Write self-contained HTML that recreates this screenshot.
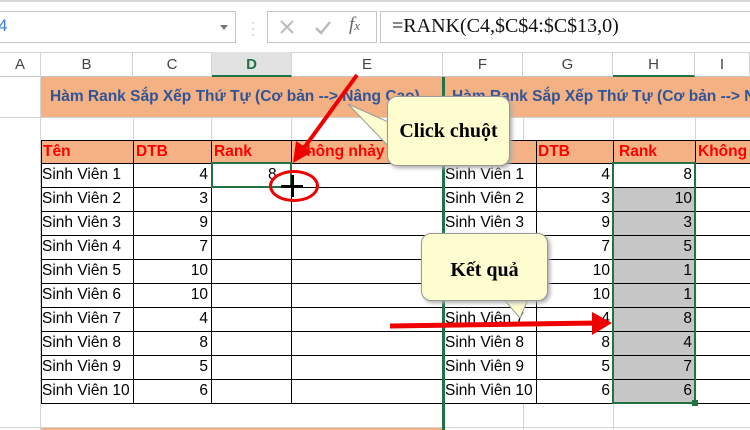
<!DOCTYPE html><html><head><meta charset="utf-8"><style>
body{margin:0;width:750px;height:430px;overflow:hidden;background:#fff;font-family:"Liberation Sans","DejaVu Sans",sans-serif;position:relative}
.a{position:absolute;box-sizing:border-box}
.c{position:absolute;box-sizing:border-box;font-size:15.5px;line-height:24px;white-space:nowrap;overflow:hidden}
.hl{position:absolute;height:1px;background:#000}
.vl{position:absolute;width:1px;background:#000}
.gl{position:absolute;background:#d4d4d4}
.ch{position:absolute;top:52px;height:25px;line-height:25px;text-align:center;font-size:15px;color:#444;border-right:1px solid #d4d4d4;box-sizing:border-box}
.r{text-align:right;padding-right:3px}
.red{color:#f00;font-weight:bold}
.bub{position:absolute;background:#fdfdd0;border:1px solid #999;border-radius:10px;box-shadow:2px 2px 4px #aaa;font-family:"Liberation Serif",serif;font-weight:bold;font-size:20px;text-align:center}
</style></head><body>
<div class="a" style="left:0;top:0;width:750px;height:2px;background:#d8d8d8"></div>
<div class="a" style="left:-2px;top:11px;width:238px;height:32px;border:1px solid #c6c6c6"></div>
<div class="a" style="left:-2px;top:16px;font-size:17px;color:#3a7bd5">4</div>
<div class="a" style="left:220px;top:25px;width:0;height:0;border-left:4px solid transparent;border-right:4px solid transparent;border-top:5px solid #777"></div>
<div class="a" style="left:251px;top:19px;color:#aaa;font-size:12px;line-height:6px">·<br>·<br>·</div>
<div class="a" style="left:267px;top:11px;width:110px;height:32px;border:1px solid #c6c6c6"></div>
<svg class="a" style="left:278px;top:18px" width="80" height="20"><path d="M3 3L15 15M15 3L3 15" stroke="#bbb" stroke-width="2"/><path d="M38 10l5 5l9-11" stroke="#bbb" stroke-width="2.5" fill="none"/></svg>
<div class="a" style="left:349px;top:14px;font-family:'Liberation Serif',serif;font-style:italic;font-size:19px;color:#666">f<span style="font-size:13px">x</span></div>
<div class="a" style="left:380px;top:11px;width:380px;height:32px;border:1px solid #c6c6c6"></div>
<div class="a" style="left:392px;top:15px;font-family:'Liberation Serif',serif;font-size:20px;color:#111">=RANK(C4,$C$4:$C$13,0)</div>
<div class="a" style="left:0;top:52px;width:750px;height:25px;background:#fff;border-top:1px solid #d4d4d4;border-bottom:1px solid #c6c6c6"></div>
<div class="ch" style="left:0;width:41px">A</div>
<div class="ch" style="left:41px;width:92px">B</div>
<div class="ch" style="left:133px;width:79px">C</div>
<div class="ch" style="left:212px;width:80px;background:#e2e2e2;color:#217346;font-weight:bold;border-bottom:2px solid #217346">D</div>
<div class="ch" style="left:292px;width:151px">E</div>
<div class="ch" style="left:443px;width:80px">F</div>
<div class="ch" style="left:523px;width:90px">G</div>
<div class="ch" style="left:613px;width:82px;border-bottom:2px solid #217346">H</div>
<div class="ch" style="left:695px;width:55px">I</div>
<div class="gl" style="left:0;top:117px;width:750px;height:1px"></div>
<div class="gl" style="left:40px;top:77px;width:1px;height:353px"></div>
<div class="gl" style="left:133px;top:117px;width:1px;height:23px"></div>
<div class="gl" style="left:211px;top:117px;width:1px;height:23px"></div>
<div class="gl" style="left:291px;top:117px;width:1px;height:23px"></div>
<div class="gl" style="left:523px;top:117px;width:1px;height:23px"></div>
<div class="gl" style="left:613px;top:117px;width:1px;height:23px"></div>
<div class="gl" style="left:695px;top:117px;width:1px;height:23px"></div>
<div class="gl" style="left:0;top:427px;width:750px;height:1px"></div>
<div class="gl" style="left:523px;top:403px;width:1px;height:27px"></div>
<div class="gl" style="left:613px;top:403px;width:1px;height:27px"></div>
<div class="a" style="left:41px;top:77px;width:709px;height:40px;background:#f4b183"></div>
<div class="c" style="left:50px;top:85px;width:395px;color:#2f5597;font-weight:bold;font-size:15.5px">Hàm Rank Sắp Xếp Thứ Tự (Cơ bản --> Nâng Cao)</div>
<div class="c" style="left:452px;top:85px;width:300px;color:#2f5597;font-weight:bold;font-size:15.5px">Hàm Rank Sắp Xếp Thứ Tự (Cơ bản --> Nâng Cao)</div>
<div class="a" style="left:41px;top:140px;width:709px;height:23px;background:#f4b183"></div>
<div class="c red" style="left:43px;top:140px">Tên</div>
<div class="c red" style="left:136px;top:140px">DTB</div>
<div class="c red" style="left:214px;top:140px">Rank</div>
<div class="c red" style="left:295px;top:140px;width:146px">Không nhảy bậc</div>
<div class="c red" style="left:446px;top:140px">Tên</div>
<div class="c red" style="left:538px;top:140px">DTB</div>
<div class="c red" style="left:619px;top:140px">Rank</div>
<div class="c red" style="left:698px;top:140px">Không</div>
<div class="a" style="left:614px;top:187px;width:81px;height:216px;background:#c6c6c6"></div>
<div id="rows"></div>
<script>
var d=[4,3,9,7,10,10,4,8,5,6],rk=[8,10,3,5,1,1,8,4,7,6],h='';
for(var i=0;i<10;i++){var y=163+i*24;
h+='<div class="c" style="left:42px;top:'+y+'px">Sinh Viên '+(i+1)+'</div>';
h+='<div class="c r" style="left:133px;top:'+y+'px;width:78px">'+d[i]+'</div>';
h+='<div class="c" style="left:445px;top:'+y+'px;width:92px">Sinh Viên '+(i+1)+'</div>';
h+='<div class="c r" style="left:536px;top:'+y+'px;width:77px">'+d[i]+'</div>';
h+='<div class="c r" style="left:613px;top:'+y+'px;width:82px">'+rk[i]+'</div>';}
for(var i=0;i<=11;i++){var y=140+(i==0?0:23+(i-1)*24);h+='<div class="hl" style="left:41px;top:'+y+'px;width:709px"></div>';}
[41,133,211,291,536,613,695].forEach(function(x){h+='<div class="vl" style="left:'+x+'px;top:140px;height:264px"></div>';});
document.getElementById('rows').innerHTML=h;
</script>
<div class="c" style="left:268px;top:163px;width:20px">8</div>
<div class="a" style="left:211px;top:162px;width:81px;height:26px;border:2px solid #217346"></div>
<div class="a" style="left:612px;top:162px;width:84px;height:242px;border:2px solid #217346"></div>
<div class="a" style="left:692px;top:400px;width:6px;height:6px;background:#217346"></div>
<div class="a" style="left:442px;top:77px;width:3px;height:353px;background:#217346"></div>
<div class="a" style="left:41px;top:428px;width:401px;height:2px;background:#f4b183"></div>
<div class="a" style="left:269px;top:170px;width:50px;height:32px;border:3px solid #e00;border-radius:50%"></div>
<div class="a" style="left:291px;top:175px;width:3px;height:22px;background:#000"></div>
<div class="a" style="left:281px;top:185px;width:22px;height:3px;background:#000"></div>
<svg class="a" style="left:0;top:0" width="750" height="430">
<path d="M357 75 L304 148" stroke="#e00" stroke-width="4"/>
<polygon points="293,163 296,141 312,152" fill="#e00"/>
<path d="M390 326 L598 323" stroke="#e00" stroke-width="5"/>
<polygon points="612,323 592,312 592,335" fill="#e00"/>
</svg>
<svg class="a" style="left:0;top:0" width="750" height="430">
<polygon points="348,104 395,125 392,150" fill="#fdfdd0" stroke="#999"/>
<polygon points="500,295 520,318 530,295" fill="#fdfdd0" stroke="#999"/>
</svg>
<div class="bub" style="left:387px;top:96px;width:121px;height:68px;line-height:68px">Click chuột</div>
<div class="bub" style="left:421px;top:233px;width:125px;height:66px;line-height:72px">Kết quả</div>
</body></html>
